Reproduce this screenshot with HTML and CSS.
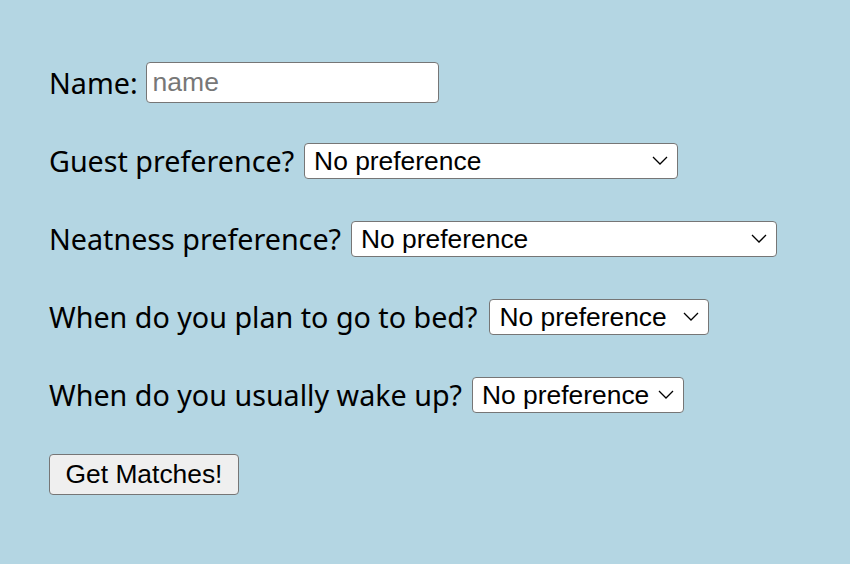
FILE: index.html
```html
<!DOCTYPE html>
<html>
<head>
<meta charset="utf-8">
<link rel="stylesheet" href="styles.css">
</head>
<body>
<form class="form">
  <div class="row">
    <label class="label" for="name">Name:</label>
    <input class="text-input" id="name" type="text" placeholder="name">
  </div>
  <div class="row">
    <label class="label">Guest preference?</label>
    <select class="select select-guest"><option>No preference</option></select>
  </div>
  <div class="row">
    <label class="label">Neatness preference?</label>
    <select class="select select-neat"><option>No preference</option></select>
  </div>
  <div class="row">
    <label class="label">When do you plan to go to bed?</label>
    <select class="select select-bed"><option>No preference</option></select>
  </div>
  <div class="row">
    <label class="label">When do you usually wake up?</label>
    <select class="select select-wake"><option>No preference</option></select>
  </div>
  <div class="row row-submit">
    <button class="button" type="button">Get Matches!</button>
  </div>
</form>
</body>
</html>
```

FILE: styles.css
```css
html, body {
  margin: 0;
  padding: 0;
  background: #b4d6e3;
}
body {
  padding: 61px 0 0 49px;
}
.form {
  display: flex;
  flex-direction: column;
  gap: 36px;
}
.row {
  display: flex;
  align-items: center;
  gap: 10px;
  height: 42px;
}
.row-submit {
  margin-top: 2px;
}
.label {
  font-family: "Noto Sans", sans-serif;
  font-size: 28.7px;
  line-height: 1;
  padding-top: 2px;
  color: #000;
}
.text-input {
  box-sizing: border-box;
  width: 293px;
  height: 41px;
  margin: 0 0 0 -2px;
  padding: 0 6px;
  border: 1.5px solid #767676;
  border-radius: 4px;
  background: #fff;
  font-family: "Liberation Sans", Arial, sans-serif;
  font-size: 26.5px;
  color: #000;
}
.text-input::placeholder {
  color: #777;
}
.select {
  box-sizing: border-box;
  -webkit-appearance: none;
  appearance: none;
  height: 36px;
  margin: 1px 0 0;
  padding: 0 30px 0 9px;
  border: 1.5px solid #767676;
  border-radius: 4px;
  background-color: #fff;
  background-image: url("data:image/svg+xml;utf8,<svg xmlns='http://www.w3.org/2000/svg' width='16' height='9' viewBox='0 0 16 9'><path d='M1 1 L8 8 L15 1' fill='none' stroke='%23000' stroke-width='1.3'/></svg>");
  background-repeat: no-repeat;
  background-size: 16px 9px;
  background-position: right 9px center;
  font-family: "Liberation Sans", Arial, sans-serif;
  font-size: 26.4px;
  color: #000;
}
.select-guest { width: 374px; }
.select-neat { width: 426px; }
.select-bed { width: 220px; margin-left: 2px; }
.select-wake { width: 212px; }
.button {
  box-sizing: border-box;
  width: 190px;
  height: 41px;
  margin: 0;
  padding: 0;
  border: 1.5px solid #767676;
  border-radius: 4px;
  background: #efefef;
  font-family: "Liberation Sans", Arial, sans-serif;
  font-size: 26.4px;
  color: #000;
}
```
